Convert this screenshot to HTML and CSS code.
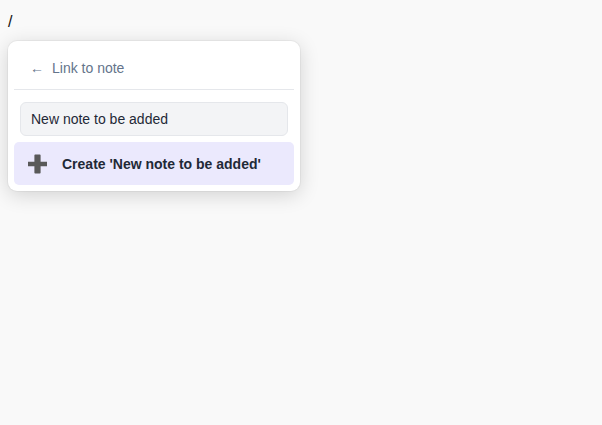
FILE: index.html
```html
<!DOCTYPE html>
<html>
<head>
<meta charset="utf-8">
<link rel="stylesheet" href="styles.css">
</head>
<body>
<div class="line">/</div>
<div class="popup">
  <div class="header"><span class="arrow">←</span><span class="title">Link to note</span></div>
  <div class="divider"></div>
  <div class="search"><div class="input">New note to be added</div></div>
  <div class="option">
    <svg class="plus" width="19" height="20" viewBox="0 0 19 20"><path d="M7.2 0.5h4.6a0.8 0.8 0 0 1 0.8 0.8v6.4h5.9a0.8 0.8 0 0 1 0.8 0.8v3a0.8 0.8 0 0 1-0.8 0.8h-5.9v6.4a0.8 0.8 0 0 1-0.8 0.8h-4.6a0.8 0.8 0 0 1-0.8-0.8v-6.4h-5.9a0.8 0.8 0 0 1-0.8-0.8v-3a0.8 0.8 0 0 1 0.8-0.8h5.9v-6.4a0.8 0.8 0 0 1 0.8-0.8z" fill="#595959"/></svg>
    <span class="label">Create 'New note to be added'</span>
  </div>
</div>
</body>
</html>
```
FILE: styles.css
```css
html {
  background: #f9f9f9;
  height: 100%;
}
body {
  margin: 0;
  padding: 8px;
  box-sizing: border-box;
  min-height: 100%;
  font-family: "Liberation Sans", Arial, sans-serif;
  font-size: 16px;
  color: #111;
}
.line {
  padding-top: 5px;
  line-height: 18px;
  height: 18px;
}
.popup {
  margin-top: 10px;
  width: 292px;
  box-sizing: border-box;
  padding: 6px;
  background: #fff;
  border-radius: 9px;
  box-shadow: 0 4px 20px rgba(0, 0, 0, 0.16), 0 0 0 1px rgba(0, 0, 0, 0.04);
}
.header {
  display: flex;
  align-items: center;
  height: 42px;
  padding-left: 16px;
  font-size: 14px;
  color: #64748b;
}
.arrow {
  font-size: 14px;
  width: 22px;
}
.divider {
  height: 1px;
  background: #e5e7eb;
}
.search {
  padding: 12px 6px 6px;
}
.input {
  height: 32px;
  line-height: 32px;
  border: 1px solid #e5e7eb;
  border-radius: 6px;
  background: #f3f4f6;
  padding-left: 10px;
  font-size: 14px;
  color: #1f2937;
}
.option {
  display: flex;
  align-items: center;
  height: 43px;
  padding-left: 14px;
  background: #ebe9fd;
  border-radius: 5px;
  font-size: 14px;
  font-weight: bold;
  color: #1f2937;
}
.plus {
  margin-right: 15px;
  flex: none;
}
```
